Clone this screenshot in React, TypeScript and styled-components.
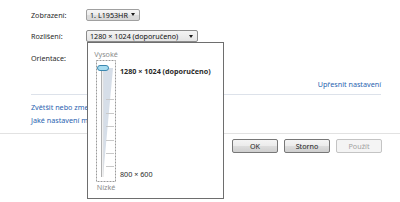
import React from 'react'
import styled, { createGlobalStyle } from 'styled-components'

const Global = createGlobalStyle`
  html, body {
    margin: 0;
    padding: 0;
    background: #ffffff;
  }
  body {
    font-family: "Noto Sans", "Open Sans", sans-serif;
    font-size: 7.2px;
    color: #2a2a2a;
  }
`

const Page = styled.div`
  position: relative;
  width: 400px;
  height: 202px;
  overflow: hidden;
  background: #ffffff;
`

const Content = styled.div`
  display: flex;
  flex-direction: column;
  padding: 8px 19px 0 31px;
`

const FieldRow = styled.div<{ $h: number; $mt?: number }>`
  display: flex;
  align-items: center;
  height: ${p => p.$h}px;
  margin-top: ${p => p.$mt ?? 0}px;
`

const Label = styled.span`
  width: 55px;
  flex: none;
`

const Combo = styled.div<{ $w: number; $open?: boolean }>`
  display: flex;
  align-items: center;
  justify-content: space-between;
  box-sizing: border-box;
  width: ${p => p.$w}px;
  height: 12px;
  padding: 0 4px 0 3px;
  border: 1px solid ${p => (p.$open ? '#8c8c8c' : '#a0a0a0')};
  border-radius: 2px;
  background: ${p =>
    p.$open
      ? 'linear-gradient(#f4f4f4, #e4e4e4)'
      : 'linear-gradient(#f6f6f6 0%, #ececec 50%, #dcdcdc 51%, #d8d8d8 100%)'};
  color: #101010;
`

const Arrow = styled.span`
  width: 0;
  height: 0;
  border-left: 2.5px solid transparent;
  border-right: 2.5px solid transparent;
  border-top: 3px solid #1a1a1a;
`

const RightLinkRow = styled.div`
  display: flex;
  justify-content: flex-end;
  margin-top: 15px;
  height: 10px;
  align-items: center;
`

const Link = styled.a`
  color: #2a64b0;
  text-decoration: none;
  white-space: nowrap;
`

const Rule = styled.div`
  height: 1px;
  background: #dde2ea;
  margin-top: 5px;
`

const LinkList = styled.div`
  display: flex;
  flex-direction: column;
  gap: 3px;
  margin-top: 7px;
`

const LinkLine = styled.div`
  height: 10px;
  display: flex;
  align-items: center;
`

const Footer = styled.div`
  margin-top: 8px;
  border-top: 1px solid #e2e2e2;
  display: flex;
  justify-content: flex-end;
  gap: 6px;
  padding: 5px 18px 0 0;
`

const Button = styled.button<{ $disabled?: boolean }>`
  box-sizing: border-box;
  width: 46px;
  height: 14px;
  padding: 0;
  font: inherit;
  border-radius: 2px;
  border: 1px solid ${p => (p.$disabled ? '#c4c4c4' : '#777777')};
  color: ${p => (p.$disabled ? '#a0a0a0' : '#1a1a1a')};
  background: ${p =>
    p.$disabled
      ? '#f4f4f4'
      : 'linear-gradient(#f4f4f4 0%, #ebebeb 50%, #dddddd 51%, #cfcfcf 100%)'};
`

/* open resolution dropdown */
const Popup = styled.div`
  position: absolute;
  left: 87px;
  top: 42px;
  width: 137px;
  height: 157px;
  box-sizing: border-box;
  background: #ffffff;
  border: 1px solid #6e6e6e;
  display: flex;
  gap: 4px;
  padding: 6px 0 0 8px;
`

const SliderCol = styled.div`
  display: flex;
  flex-direction: column;
  align-items: center;
  width: 20px;
`

const EndLabel = styled.span`
  color: #8c8c8c;
  height: 11px;
  line-height: 11px;
`

const LevelCol = styled.div`
  display: flex;
  flex-direction: column;
  justify-content: space-between;
  padding: 17px 0 0 0;
  height: 113px;
`

const Level = styled.span<{ $bold?: boolean }>`
  font-weight: ${p => (p.$bold ? 700 : 400)};
  white-space: nowrap;
`

const Track = () => (
  <svg width="20" height="122" viewBox="0 0 20 122">
    <rect x="0.5" y="0.5" width="19" height="121" fill="none" stroke="#9a9a9a" strokeDasharray="2 1" />
    <polygon points="7,8 17,8 7,117" fill="#d6dee8" />
    <line x1="5.5" y1="6" x2="5.5" y2="117" stroke="#b0b0b0" />
    <line x1="7" y1="6" x2="7" y2="117" stroke="#e0e0e0" />
    {[39, 53, 66, 80, 93, 106].map(y => (
      <line key={y} x1="10" y1={y + 0.5} x2="18" y2={y + 0.5} stroke="#c8c8c8" />
    ))}
    <rect x="1.5" y="5.5" width="11" height="5" rx="2.5" fill="#a8dcf0" stroke="#3c88b0" />
  </svg>
)

export default function App() {
  return (
    <Page>
      <Global />
      <Content>
        <FieldRow $h={13}>
          <Label>Zobrazení:</Label>
          <Combo $w={54}>
            <span>1. L1953HR</span>
            <Arrow />
          </Combo>
        </FieldRow>
        <FieldRow $h={12} $mt={9}>
          <Label>Rozlišení:</Label>
          <Combo $w={112} $open>
            <span>1280 × 1024 (doporučeno)</span>
            <Arrow />
          </Combo>
        </FieldRow>
        <FieldRow $h={12} $mt={10}>
          <Label>Orientace:</Label>
        </FieldRow>
        <RightLinkRow>
          <Link href="#">Upřesnit nastavení</Link>
        </RightLinkRow>
        <Rule />
        <LinkList>
          <LinkLine>
            <Link href="#">Zvětšit nebo zmenšit text a další položky</Link>
          </LinkLine>
          <LinkLine>
            <Link href="#">Jaké nastavení monitoru zvolit?</Link>
          </LinkLine>
        </LinkList>
      </Content>
      <Footer>
        <Button>OK</Button>
        <Button>Storno</Button>
        <Button $disabled disabled>
          Použít
        </Button>
      </Footer>
      <Popup>
        <SliderCol>
          <EndLabel>Vysoké</EndLabel>
          <Track />
          <EndLabel>Nízké</EndLabel>
        </SliderCol>
        <LevelCol>
          <Level $bold>1280 × 1024 (doporučeno)</Level>
          <Level>800 × 600</Level>
        </LevelCol>
      </Popup>
    </Page>
  )
}
